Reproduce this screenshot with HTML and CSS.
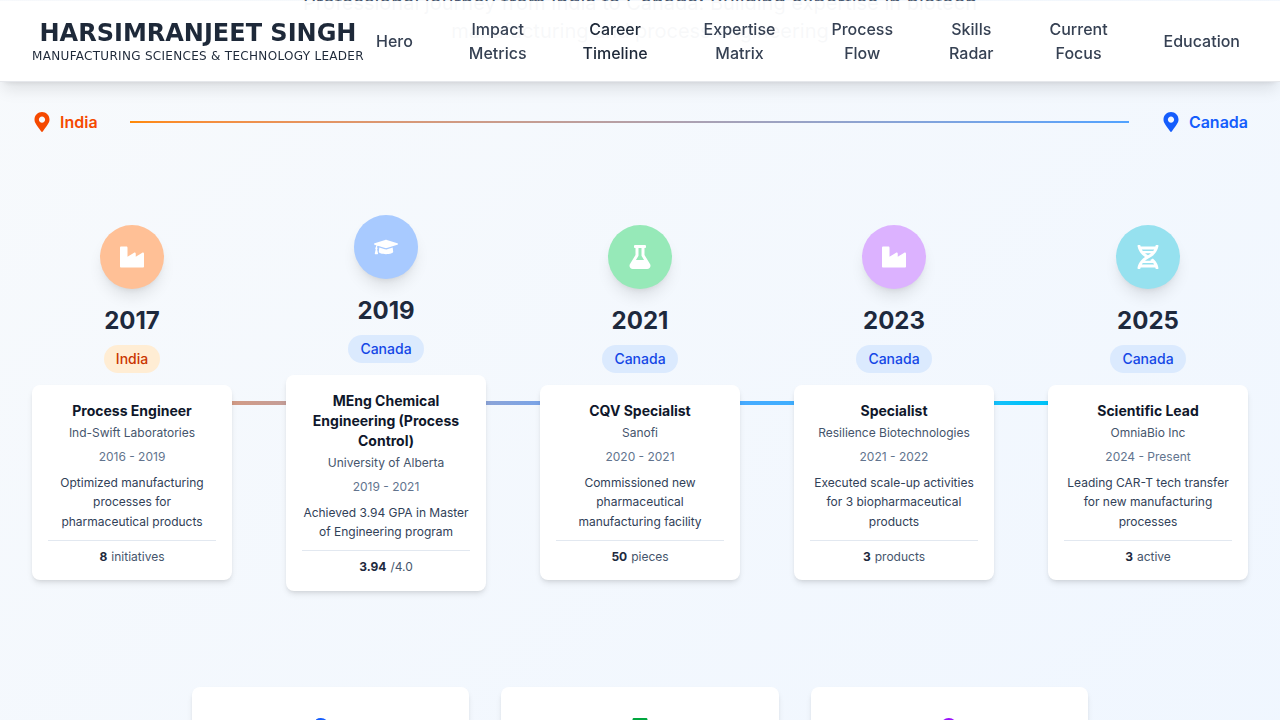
FILE: index.html
```html
<!DOCTYPE html>
<html lang="en">
<head>
<meta charset="utf-8">
<title>Harsimranjeet Singh</title>
<link rel="stylesheet" href="styles.css">
</head>
<body>
<svg class="sprite" aria-hidden="true">
  <symbol id="pin" viewBox="0 0 384 512"><path d="M172.268 501.67C26.97 291.031 0 269.413 0 192 0 85.961 85.961 0 192 0s192 85.961 192 192c0 77.413-26.97 99.031-172.268 309.67-9.535 13.774-29.93 13.773-39.464 0zM192 272c44.183 0 80-35.817 80-80s-35.817-80-80-80-80 35.817-80 80 35.817 80 80 80z"/></symbol>
  <symbol id="industry" viewBox="0 0 512 512"><path d="M475.115 163.781L336 252.309v-68.28c0-18.916-20.931-30.399-36.885-20.248L160 252.309V56c0-13.255-10.745-24-24-24H24C10.745 32 0 42.745 0 56v400c0 13.255 10.745 24 24 24h464c13.255 0 24-10.745 24-24V184.029c0-18.917-20.931-30.399-36.885-20.248z"/></symbol>
  <symbol id="cap" viewBox="0 0 640 512"><path d="M622.34 153.2L343.4 67.5c-15.2-4.67-31.6-4.67-46.79 0L17.66 153.2c-23.54 7.23-23.54 38.36 0 45.59l48.63 14.94c-10.67 13.19-17.23 29.28-17.88 46.9C38.78 266.15 32 276.11 32 288c0 10.78 5.68 19.85 13.86 25.65L20.33 428.53C18.11 438.52 25.71 448 35.94 448h56.11c10.24 0 17.84-9.48 15.62-19.47L82.14 313.65C90.32 307.85 96 298.78 96 288c0-11.57-6.47-21.25-15.66-26.87.76-15.02 8.44-28.3 20.69-36.72L296.6 284.5c9.06 2.78 26.44 6.25 46.79 0l278.95-85.7c23.55-7.24 23.55-38.36 0-45.6zM352.79 315.09c-28.53 8.76-52.84 3.92-65.59 0l-145.02-44.55L128 384c0 35.35 85.96 64 192 64s192-28.65 192-64l-14.18-113.47-145.03 44.56z"/></symbol>
  <symbol id="flask" viewBox="0 0 448 512"><path d="M437.2 403.5L320 215V64h8c13.3 0 24-10.7 24-24V24c0-13.3-10.7-24-24-24H120c-13.3 0-24 10.7-24 24v16c0 13.3 10.7 24 24 24h8v151L10.8 403.5C-18.5 450.6 15.3 512 70.9 512h306.2c55.7 0 89.4-61.5 60.1-108.5zM137.9 320l48.2-77.6c3.7-5.2 5.8-11.6 5.8-18.4V64h64v160c0 6.9 2.2 13.2 5.8 18.4l48.2 77.6h-172z"/></symbol>
  <symbol id="dna" viewBox="0 0 448 512"><path d="M.1 494.1c-1.1 9.5 6.3 17.8 15.9 17.8l32.3.1c8.1 0 14.9-5.9 16-13.9.7-4.9 1.8-11.1 3.4-18.1H380c1.6 6.9 2.9 13.2 3.5 18.1 1.1 8 7.9 14 16 13.9l32.3-.1c9.6 0 17.1-8.3 15.9-17.8-4.6-37.9-25.6-129-118.9-207.7-17.6 12.4-37.1 24.2-58.5 35.4 6.2 4.6 11.4 9.4 17 14.2H159.7c21.3-18.1 47-35.6 78.7-51.4C410.5 199.1 442.1 65.8 447.9 17.9 449 8.4 441.6.1 432 .1L399.6 0c-8.1 0-14.9 5.9-16 13.9-.7 4.9-1.8 11.1-3.4 18.1H67.8c-1.6-7-2.7-13.1-3.4-18.1-1.1-8-7.9-13.9-16-13.9L16.1.1C6.5.1-1 8.4.1 17.9 5.3 60.8 31.4 171.8 160 256 31.5 340.2 5.3 451.2.1 494.1zM224 219.6c-25.1-13.7-46.4-28.4-64.3-43.6h128.5c-17.8 15.2-39.1 30-64.2 43.6zM355.1 96c-5.8 10.4-12.8 21.1-21 32H114c-8.3-10.9-15.3-21.6-21-32h262.1zM92.9 416c5.8-10.4 12.8-21.1 21-32h219.4c8.3 10.9 15.4 21.6 21.2 32H92.9z"/></symbol>
</svg>

<header class="header">
  <div class="brand">
    <div class="brand-name">HARSIMRANJEET SINGH</div>
    <div class="brand-role">MANUFACTURING SCIENCES &amp; TECHNOLOGY LEADER</div>
  </div>
  <nav class="nav">
    <a>Hero</a><a>Impact Metrics</a><a class="active">Career Timeline</a><a>Expertise Matrix</a><a>Process Flow</a><a>Skills Radar</a><a>Current Focus</a><a>Education</a>
  </nav>
</header>

<main class="page">
  <section class="career">
    <p class="intro">Professional journey from India to Canada: Building expertise in biotech manufacturing and process engineering</p>

    <div class="route">
      <div class="place india"><svg><use href="#pin"/></svg>India</div>
      <div class="route-line"></div>
      <div class="place canada"><svg><use href="#pin"/></svg>Canada</div>
    </div>

    <div class="timeline">
      <article class="stop">
        <div class="badge orange"><svg><use href="#industry"/></svg></div>
        <div class="year">2017</div>
        <div class="pill pill-india">India</div>
        <div class="card">
          <h3>Process Engineer</h3>
          <div class="company">Ind-Swift Laboratories</div>
          <div class="dates">2016 - 2019</div>
          <p>Optimized manufacturing processes for pharmaceutical products</p>
          <div class="metric"><b>8</b><span>initiatives</span></div>
        </div>
      </article>
      <article class="stop">
        <div class="badge blue"><svg><use href="#cap"/></svg></div>
        <div class="year">2019</div>
        <div class="pill">Canada</div>
        <div class="card">
          <h3>MEng Chemical Engineering (Process Control)</h3>
          <div class="company">University of Alberta</div>
          <div class="dates">2019 - 2021</div>
          <p>Achieved 3.94 GPA in Master of Engineering program</p>
          <div class="metric"><b>3.94</b><span>/4.0</span></div>
        </div>
      </article>
      <article class="stop">
        <div class="badge green"><svg><use href="#flask"/></svg></div>
        <div class="year">2021</div>
        <div class="pill">Canada</div>
        <div class="card">
          <h3>CQV Specialist</h3>
          <div class="company">Sanofi</div>
          <div class="dates">2020 - 2021</div>
          <p>Commissioned new pharmaceutical manufacturing facility</p>
          <div class="metric"><b>50</b><span>pieces</span></div>
        </div>
      </article>
      <article class="stop">
        <div class="badge purple"><svg><use href="#industry"/></svg></div>
        <div class="year">2023</div>
        <div class="pill">Canada</div>
        <div class="card">
          <h3>Specialist</h3>
          <div class="company">Resilience Biotechnologies</div>
          <div class="dates">2021 - 2022</div>
          <p>Executed scale-up activities for 3 biopharmaceutical products</p>
          <div class="metric"><b>3</b><span>products</span></div>
        </div>
      </article>
      <article class="stop">
        <div class="badge cyan"><svg><use href="#dna"/></svg></div>
        <div class="year">2025</div>
        <div class="pill">Canada</div>
        <div class="card">
          <h3>Scientific Lead</h3>
          <div class="company">OmniaBio Inc</div>
          <div class="dates">2024 - Present</div>
          <p>Leading CAR-T tech transfer for new manufacturing processes</p>
          <div class="metric"><b>3</b><span>active</span></div>
        </div>
      </article>
    </div>

    <div class="summary">
      <div class="summary-card"><svg viewBox="0 0 30 30" fill="#155dfc"><circle cx="4.8" cy="8.5" r="8.5"/></svg></div>
      <div class="summary-card"><svg fill="#00a63e"><use href="#flask"/></svg></div>
      <div class="summary-card"><svg viewBox="0 0 30 30" fill="#9810fa"><circle cx="14.8" cy="8.5" r="8.5"/></svg></div>
    </div>
  </section>
</main>
</body>
</html>
```
FILE: styles.css
```css
* { box-sizing: border-box; margin: 0; padding: 0; }
html, body { height: 720px; overflow: hidden; }
body { font-family: Inter, "Liberation Sans", sans-serif; font-size: 16px; line-height: 24px; color: #1d293d; background: #f8fafc; }
.sprite { position: absolute; width: 0; height: 0; }

.header { position: fixed; top: 1px; left: 0; z-index: 10; width: 100%; height: 81px; display: flex; align-items: center; padding: 0 40px 0 32px; background: rgba(255, 255, 255, .96); border-bottom: 1px solid #e5e7eb; box-shadow: 0 10px 15px -3px rgba(0, 0, 0, .1), 0 4px 6px -4px rgba(0, 0, 0, .1); }
.brand { flex: none; width: 332px; margin-right: 12px; text-align: center; white-space: nowrap; font-family: "DejaVu Sans", sans-serif; color: #1e2939; }
.brand-name { font-size: 24px; line-height: 30px; font-weight: 700; }
.brand-role { font-size: 12px; line-height: 16px; letter-spacing: .3px; }
.nav { flex: 1; display: flex; align-items: center; justify-content: space-between; font-weight: 500; text-align: center; color: #364153; }
.nav a { width: min-content; }
.nav .active { color: #1e2939; }

.page { height: 720px; overflow: hidden; }
.career { height: 1090px; margin-top: -160px; padding: 149.4px 32px 0; background: linear-gradient(to bottom right, #f8fafc, #eff6ff); }
.intro { width: 768px; margin: 0 auto 64.2px; font-size: 20px; line-height: 28px; text-align: center; color: #45556c; }

.route { display: flex; align-items: center; }
.place { display: flex; align-items: center; gap: 8px; font-weight: 600; }
.place svg { width: 20px; height: 20px; fill: currentColor; }
.india { color: #f54900; }
.canada { color: #155dfc; }
.route-line { flex: 1; height: 2px; margin: 0 32px; background: linear-gradient(to right in oklab, #ff8904, #51a2ff); }

.timeline { height: 376px; margin-top: 81px; display: flex; justify-content: space-between; align-items: center; background: linear-gradient(to right in oklab, oklch(75% .183 55.934), oklch(70.7% .165 254.624), oklch(78.9% .154 211.53)) center / 100% 4px no-repeat; }
.stop { width: 200px; display: flex; flex-direction: column; align-items: center; }
.badge { width: 64px; height: 64px; border-radius: 50%; display: flex; align-items: center; justify-content: center; box-shadow: 0 10px 15px -3px rgba(0, 0, 0, .1), 0 4px 6px -4px rgba(0, 0, 0, .1); }
.badge svg { width: 24px; height: 24px; fill: #fff; }
.orange { background: #ffc096; }
.blue { background: #a8caff; }
.green { background: #96e9b8; }
.purple { background: #dcb2ff; }
.cyan { background: #96e1ef; }
.year { margin-top: 16px; font-size: 24px; line-height: 32px; font-weight: 700; }
.pill { margin: 8px 0 12px; padding: 4px 12px; border-radius: 14px; font-size: 14px; line-height: 20px; font-weight: 500; background: #dbeafe; color: #1447e6; }
.pill-india { background: #ffedd4; color: #ca3500; }
.card { width: 200px; padding: 16px 16px 15.8px; border-radius: 8px; background: #fff; text-align: center; font-size: 12px; line-height: 16px; box-shadow: 0 4px 6px -1px rgba(0, 0, 0, .1), 0 2px 4px -2px rgba(0, 0, 0, .1); }
.card h3 { font-size: 14px; line-height: 20px; font-weight: 700; color: #0f172b; }
.company { margin-top: 4px; color: #45556c; }
.dates { margin-top: 8px; color: #62748e; }
.card p { margin-top: 8px; line-height: 19.5px; color: #314158; }
.metric { display: flex; justify-content: center; gap: 4px; margin-top: 8.2px; padding-top: 8px; border-top: 1px solid #e2e8f0; color: #45556c; }
.metric b { color: #1d293d; }

.summary { width: 896px; margin: 96px auto 0; display: grid; grid-template-columns: repeat(3, 1fr); gap: 32px; }
.summary-card { height: 150px; padding-top: 31px; border-radius: 8px; background: #fff; display: flex; justify-content: center; align-items: flex-start; box-shadow: 0 4px 6px -1px rgba(0, 0, 0, .1), 0 2px 4px -2px rgba(0, 0, 0, .1); }
.summary-card svg { width: 30px; height: 30px; }
```
